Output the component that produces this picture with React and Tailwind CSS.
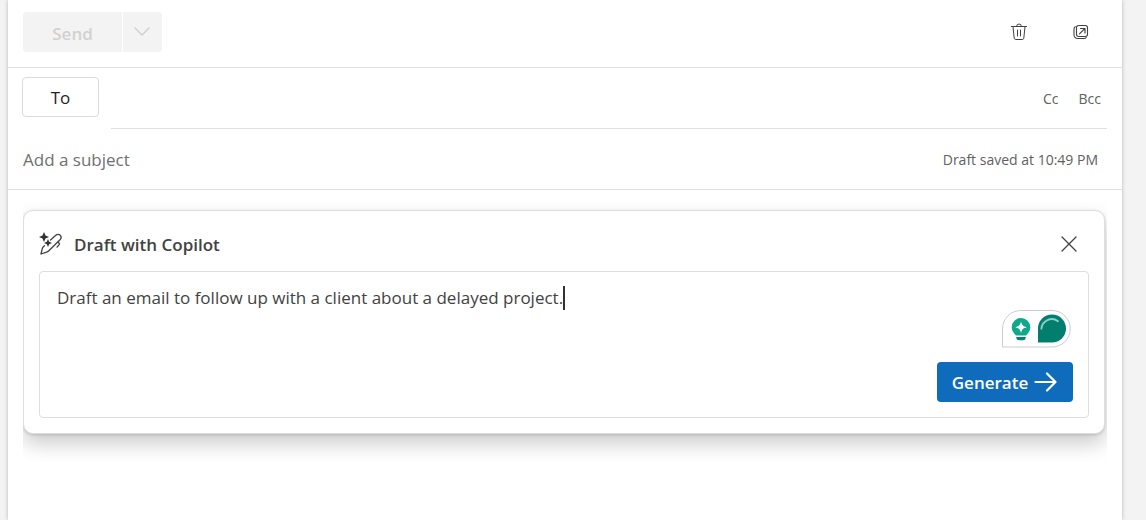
import { useState } from 'react'

function TrashIcon() {
  return (
    <svg width="18" height="18" viewBox="0 0 18 18" fill="none" stroke="#424242" strokeLinecap="round" strokeLinejoin="round" aria-hidden="true">
      <path d="M1.5 3.5h15" strokeWidth="1.2" />
      <path d="M6.6 3.2a2.4 2.2 0 0 1 4.8 0" strokeWidth="1" />
      <path d="M3 3.8l1.2 11.4a1.6 1.6 0 0 0 1.6 1.3h6.400a1.6 1.6 0 0 0 1.6-1.3L15 3.8" strokeWidth="1" />
      <path d="M7.5 7v6M10.5 7v6" strokeWidth="1" />
    </svg>
  )
}

function PopOutIcon() {
  return (
    <svg width="16" height="16" viewBox="0 0 16 16" fill="none" stroke="#424242" strokeLinecap="round" strokeLinejoin="round" aria-hidden="true">
      <rect x="3.5" y="1.5" width="11" height="11" rx="2.2" strokeWidth="1.1" />
      <path d="M2.2 2.700C1.300 3.300 1 4 1 5v6a3.500 3.500 0 0 0 3.500 3.500h6.500c1 0 1.700-.3 2.200-1" strokeWidth="1.1" />
      <path d="M6.500 9.800l5-5M7.500 4.500H12V9" strokeWidth="1.2" />
    </svg>
  )
}

function CopilotPenIcon() {
  return (
    <svg width="24" height="24" viewBox="0 0 24 24" fill="none" aria-hidden="true">
      <path d="M5 0l1.500 3.500L10 5 6.500 6.500 5 10 3.500 6.500 0 5l3.500-1.500z" fill="#333" />
      <path d="M9 7l1.200 2.800L13 11l-2.800 1.200L9 15l-1.200-2.800L5 11l2.800-1.200z" fill="#333" />
      <path d="M11.500 8l5-4.500c1.500-1.300 3.600-1.300 4.700-.2 1.200 1.200 1.100 3-.2 4.400L9.600 19c-.6.600-1.200.9-2 1.100L2 22l1.300-5.300c.2-.8.5-1.300 1.100-1.900l1.200-1.200" stroke="#424242" strokeWidth="1.300" strokeLinejoin="round" strokeLinecap="round" />
      <path d="M19 10.200l1.200 1.100c.4.400.4.900 0 1.300l-2.200 2.500" stroke="#424242" strokeWidth="1.300" strokeLinecap="round" />
    </svg>
  )
}

function WritingHelper() {
  return (
    <svg width="69" height="38" viewBox="0 0 69 38" fill="none" aria-hidden="true">
      <path d="M.5 37V19A18.300 18.300 0 0 1 18.800.5H50A18.200 18.200 0 0 1 50 37z" fill="#fff" stroke="#c9cbdc" />
      <path d="M19 8a9.300 9.300 0 0 1 9.300 9.300c0 3.500-2 6-4.300 8.200H14c-2.300-2.200-4.300-4.700-4.300-8.200A9.300 9.300 0 0 1 19 8z" fill="#0fa88c" />
      <path d="M14.200 27h9.600c0 2-1 3.300-2.800 3.300h-4c-1.800 0-2.800-1.300-2.800-3.300z" fill="#07836c" />
      <path d="M19 11.500c.9 3.600 2 4.700 5.700 5.700-3.700 1-4.800 2.100-5.700 5.700-.9-3.600-2-4.700-5.700-5.700 3.700-1 4.800-2.100 5.700-5.700z" fill="#fff" />
      <path d="M36 32.500V18.400A14 14 0 1 1 50 32.500z" fill="#027e6f" />
      <path d="M39.400 18.800a10.400 10.400 0 0 1 16.600-7.600" stroke="#8bd0c4" strokeWidth="1.800" strokeLinecap="round" />
    </svg>
  )
}

export default function App() {
  const [prompt, setPrompt] = useState('Draft an email to follow up with a client about a delayed project.')

  return (
    <div className="min-h-screen bg-[#f3f3f3] pl-2 pr-6 font-['Open_Sans',sans-serif] text-[#424242]">
      <main className="min-h-screen bg-white shadow-[0_0_4px_rgba(0,0,0,0.25)]">
        <header className="flex items-start justify-between border-b border-[#e0e0e0] pt-3 pr-[33px] pb-[15px] pl-[15px]">
          <div className="flex h-10 gap-px">
            <button disabled className="w-[99px] rounded-l bg-[#f3f3f3] pt-1 text-[17px] font-semibold text-[#d1d1d1]">Send</button>
            <button disabled aria-label="Send options" className="flex w-[39px] items-center justify-center rounded-r bg-[#f3f3f3] pr-[2px]">
              <svg width="16" height="10" viewBox="0 0 16 10" fill="none" stroke="#cdcdcd" strokeWidth="1.300" strokeLinecap="round" strokeLinejoin="round">
                <path d="M1 1l7 7 7-7" />
              </svg>
            </button>
          </div>
          <div className="flex h-10 items-center gap-[45px]">
            <button aria-label="Discard"><TrashIcon /></button>
            <button aria-label="Open in new window"><PopOutIcon /></button>
          </div>
        </header>

        <div className="flex pr-[15px] pl-[14px]">
          <button className="mt-[9px] h-10 w-[77px] shrink-0 rounded border border-[#dcdcdc] pt-[2px] text-[17px] text-[#242424]">To</button>
          <div className="ml-3 flex h-[61px] grow items-center border-b border-[#e0e0e0] pt-[2px] pr-[6px] text-sm text-[#616161]">
            <input aria-label="To" className="min-w-0 grow outline-none" />
            <button className="mr-5">Cc</button>
            <button>Bcc</button>
          </div>
        </div>

        <div className="flex h-[61px] items-center border-b border-[#e0e0e0] pt-[2px] pr-6 pl-[15px] text-[#616161]">
          <input aria-label="Subject" placeholder="Add a subject" className="min-w-0 grow text-[17px] outline-none placeholder:text-[#707070]" />
          <span className="text-sm">Draft saved at 10:49 PM</span>
        </div>

        <div className="mr-[15px] ml-[15px] overflow-hidden pt-5 pr-[2px] pb-10">
          <section className="rounded-[10px] border border-[#dedede] bg-white px-[15px] pb-[15px] shadow-[0_10px_20px_rgba(0,0,0,0.2),0_1px_3px_rgba(0,0,0,0.15)]">
            <div className="flex h-[60px] items-center justify-between pt-[5px] pr-3">
              <div className="flex items-center gap-[11px]">
                <CopilotPenIcon />
                <h2 className="pt-[2px] text-[17px] font-semibold">Draft with Copilot</h2>
              </div>
              <button aria-label="Close">
                <svg width="16" height="16" viewBox="0 0 16 16" fill="none" stroke="#424242" strokeWidth="1.300" strokeLinecap="round">
                  <path d="M1 1l14 14M15 1L1 15" />
                </svg>
              </button>
            </div>
            <div className="rounded border border-[#dedede] px-[15px] pb-[15px]">
              <div className="flex h-[38px] pt-[14px] pl-[2px]">
                <textarea
                  aria-label="Describe your email"
                  rows={1}
                  value={prompt}
                  onChange={e => setPrompt(e.target.value)}
                  className="field-sizing-content max-w-full resize-none overflow-hidden text-[17px] leading-6 outline-none"
                />
                <span className="h-6 w-[2px] bg-[#333]" />
              </div>
              <div className="flex flex-col items-end">
                <button aria-label="Writing suggestions" className="mr-[2px] mb-[14px]"><WritingHelper /></button>
                <button className="flex h-10 w-[136px] items-center justify-center gap-[6px] rounded bg-[#0f6cbd] text-[17px] font-semibold text-white">
                  <span className="pt-[2px]">Generate</span>
                  <svg width="24" height="20" viewBox="0 0 24 20" fill="none" stroke="currentColor" strokeWidth="2.2" strokeLinecap="round" strokeLinejoin="round">
                    <path d="M1.500 10h20M13 1.500l8.500 8.500-8.500 8.500" />
                  </svg>
                </button>
              </div>
            </div>
          </section>
        </div>
      </main>
    </div>
  )
}
